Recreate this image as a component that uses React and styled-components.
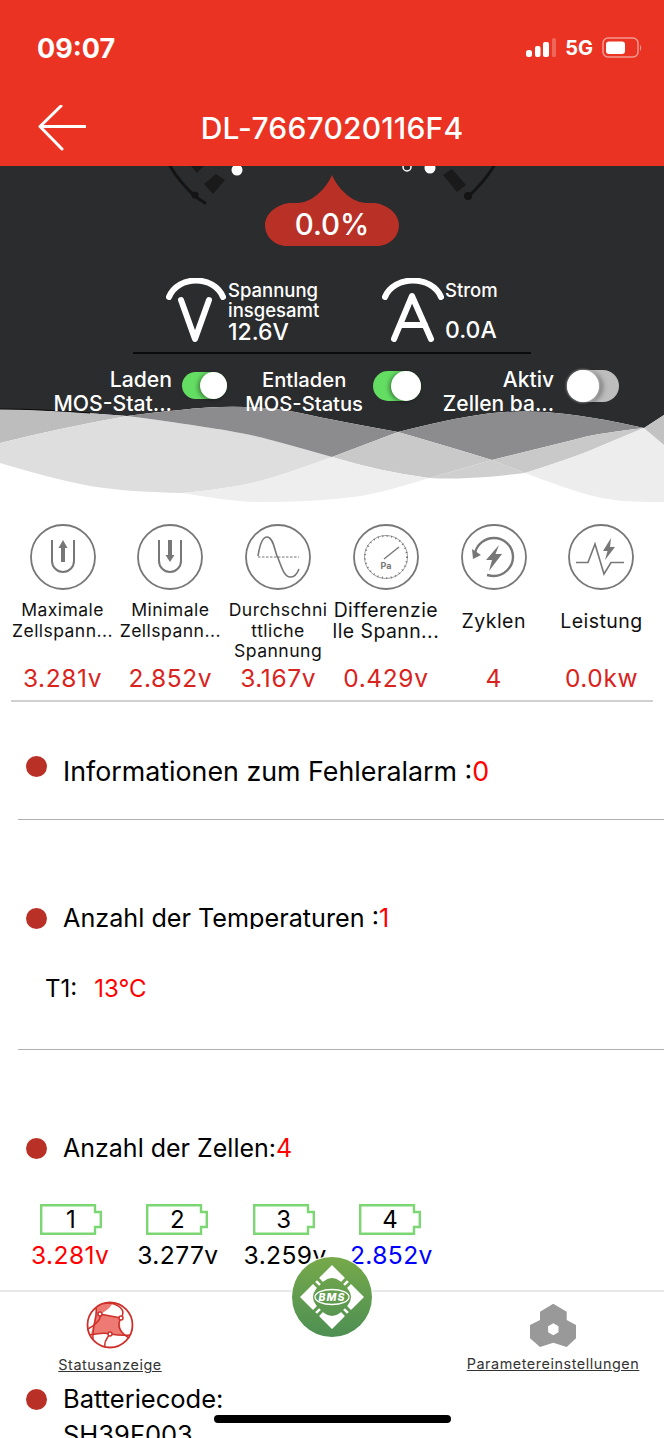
import React from "react";
import styled, { createGlobalStyle } from "styled-components";

const GlobalStyle = createGlobalStyle`
  html, body {
    margin: 0;
    padding: 0;
    background: #fff;
  }
`;

const Page = styled.div`
  position: relative;
  width: 664px;
  height: 1438px;
  overflow: hidden;
  background: #fff;
  color: #000;
  font-family: Inter, "Noto Sans", sans-serif;
`;

const Header = styled.header`
  height: 166px;
  background: #ea3323;
  color: #fff;
`;

const StatusBar = styled.div`
  height: 96px;
  padding: 0 22px 0 37px;
  box-sizing: border-box;
  display: flex;
  align-items: center;
  justify-content: space-between;
`;

const Clock = styled.span`
  font-size: 27px;
  font-weight: 700;
`;

const StatusIcons = styled.div`
  display: flex;
  align-items: center;
  gap: 9px;
`;

const Network = styled.span`
  font-size: 20px;
  font-weight: 700;
`;

const TitleBar = styled.div`
  height: 64px;
  padding: 0 38px;
  display: grid;
  grid-template-columns: 1fr auto 1fr;
  align-items: center;
`;

const Title = styled.h1`
  margin: 0;
  font-size: 30px;
  font-weight: 500;
  letter-spacing: 0.2px;
`;

const Hero = styled.section`
  position: relative;
  height: 344px;
  background: #2b2c2e;
  color: #fff;
`;

const Waves = styled.svg`
  position: absolute;
  left: 0;
  bottom: 0;
`;

const GaugeZone = styled.div`
  position: relative;
  height: 80px;
  display: flex;
  justify-content: center;
  padding-top: 9px;
  box-sizing: border-box;
`;

const GaugeMarks = styled.svg`
  position: absolute;
  left: 0;
  top: 0;
`;

const Badge = styled.div`
  position: relative;
  width: 134px;
  height: 71px;
  display: flex;
  align-items: flex-end;
  justify-content: center;
  padding-bottom: 6px;
  box-sizing: border-box;
  font-size: 29.5px;
  font-weight: 500;
  line-height: 32px;
`;

const BadgeShape = styled.svg`
  position: absolute;
  left: 0;
  top: 0;
`;

const BadgeText = styled.span`
  position: relative;
`;

const Readings = styled.div`
  position: relative;
  display: flex;
  justify-content: center;
  gap: 61px;
  padding-top: 32px;
  height: 74px;
`;

const Reading = styled.div`
  display: flex;
  width: ${(p) => p.$width}px;
`;

const ReadingText = styled.div`
  display: flex;
  flex-direction: column;
  justify-content: space-between;
  height: 62px;
  padding-top: 2px;
  font-size: 18.5px;
  font-weight: 500;
  line-height: 20px;
`;

const ReadingValue = styled.div`
  font-size: 23px;
  line-height: 24px;
`;

const HeroRule = styled.div`
  position: relative;
  width: 398px;
  height: 2px;
  margin: 0 auto;
  background: #0b0b0c;
`;

const Switches = styled.div`
  position: relative;
  display: flex;
  margin-top: 14px;
`;

const SwitchGroup = styled.div`
  width: ${(p) => p.$width}px;
  display: flex;
  justify-content: flex-end;
  gap: ${(p) => p.$gap}px;
`;

const SwitchLabel = styled.div`
  text-align: ${(p) => p.$align};
  font-size: ${(p) => p.$size}px;
  font-weight: 500;
  line-height: 23.5px;
  white-space: nowrap;
`;

const SwitchSlot = styled.div`
  height: 35px;
  display: flex;
  align-items: center;
`;

const Track = styled.div`
  position: relative;
  width: ${(p) => p.$w}px;
  height: ${(p) => p.$h}px;
  border-radius: ${(p) => p.$h / 2}px;
  background: ${(p) => (p.$on ? "#64dd63" : "#bdbdbd")};
`;

const Knob = styled.div`
  position: absolute;
  top: 0;
  ${(p) => (p.$on ? "right: 0;" : "left: 0;")}
  width: ${(p) => p.$h}px;
  height: ${(p) => p.$h}px;
  border-radius: 50%;
  background: #fff;
  box-shadow: ${(p) => (p.$on ? "-2px 1px 4px rgba(0, 0, 0, 0.4)" : "0 0 3px rgba(255, 255, 255, 0.8), 4px 1px 5px rgba(0, 0, 0, 0.35)")};
`;

const Metrics = styled.section`
  display: grid;
  grid-template-columns: repeat(6, 107.8px);
  justify-content: center;
  margin: 0 11px;
  padding-top: 14px;
  height: 176px;
  border-bottom: 2px solid #d0d0d0;
  width: 642px;
`;

const Metric = styled.div`
  display: flex;
  flex-direction: column;
  align-items: center;
`;

const MetricLabel = styled.div`
  height: 62px;
  margin-top: 10px;
  font-size: ${(p) => p.$size}px;
  line-height: 20.7px;
  letter-spacing: 0.45px;
  color: #111;
  text-align: center;
  white-space: nowrap;
`;

const MetricLines = styled.div`
  min-height: 42px;
  display: flex;
  flex-direction: column;
  justify-content: center;
`;

const MetricValue = styled.div`
  margin-top: 3px;
  font-size: 24.5px;
  line-height: 26px;
  letter-spacing: 0.6px;
  color: #d9231d;
`;

const Section = styled.section`
  margin-left: 18px;
  padding-top: ${(p) => p.$top}px;
  padding-bottom: ${(p) => p.$bottom || 0}px;
  border-bottom: ${(p) => (p.$ruled ? "1.5px solid #b0b0b0" : "none")};
`;

const RowHead = styled.div`
  display: flex;
  margin-left: 8px;
`;

const Dot = styled.span`
  flex: none;
  width: 21px;
  height: 21px;
  margin-top: ${(p) => p.$top}px;
  margin-right: 16px;
  border-radius: 50%;
  background: #b93027;
`;

const RowTitle = styled.div`
  font-size: ${(p) => p.$size}px;
  line-height: 36px;
  max-height: ${(p) => (p.$clip ? "29px" : "none")};
  overflow: hidden;
`;

const Red = styled.span`
  color: #f00;
`;

const TempRow = styled.div`
  display: flex;
  gap: 17px;
  margin: 46px 0 0 27px;
  font-size: 24px;
  line-height: 28px;
`;

const Cells = styled.div`
  display: grid;
  grid-template-columns: repeat(4, 106.3px);
  margin: 45px 0 0 18px;
`;

const Cell = styled.div`
  display: flex;
  flex-direction: column;
  align-items: flex-start;
`;

const CellShell = styled.div`
  position: relative;
  width: 62px;
  height: 31px;
  margin-left: 4px;
  display: flex;
  align-items: center;
  justify-content: center;
  font-size: 24px;
`;

const CellOutline = styled.svg`
  position: absolute;
  left: 0;
  top: 0;
`;

const CellNumber = styled.span`
  position: relative;
`;

const CellValue = styled.div`
  margin: 7px 0 0 -5px;
  font-size: 24.6px;
  line-height: 26px;
  letter-spacing: 0.4px;
  white-space: nowrap;
  color: ${(p) => p.$color};
`;

const TabBar = styled.nav`
  position: absolute;
  left: 0;
  top: 1290px;
  width: 664px;
  height: 86px;
  background: #fff;
  border-top: 2px solid #e8e8e8;
  box-sizing: border-box;
`;

const TabItem = styled.div`
  position: absolute;
  top: ${(p) => p.$top}px;
  left: ${(p) => p.$left}px;
  width: ${(p) => p.$width}px;
  display: flex;
  flex-direction: column;
  align-items: center;
`;

const TabLabel = styled.span`
  margin-top: ${(p) => p.$gap}px;
  font-size: 14.4px;
  line-height: 16px;
  letter-spacing: 0.55px;
  color: #333;
  text-decoration: underline;
  white-space: nowrap;
`;

const BmsButton = styled.div`
  position: absolute;
  left: 291px;
  top: 1256px;
  width: 82px;
  height: 82px;
  border-radius: 50%;
  background: #fff;
  display: flex;
  align-items: center;
  justify-content: center;
`;

const HomeBar = styled.div`
  position: absolute;
  left: 214px;
  top: 1415px;
  width: 237px;
  height: 8px;
  border-radius: 4px;
  background: #000;
`;

// quadratic smoothing through a list of points, without the leading move
const curve = (pts) => {
  const last = pts[pts.length - 1];
  let d = `L${pts[0][0]} ${pts[0][1]}`;
  if (pts.length === 2) return `${d}L${last[0]} ${last[1]}`;
  for (let i = 1; i < pts.length - 1; i++) {
    const end = i === pts.length - 2 ? last : [(pts[i][0] + pts[i + 1][0]) / 2, (pts[i][1] + pts[i + 1][1]) / 2];
    d += `Q${pts[i][0]} ${pts[i][1]} ${end[0]} ${end[1]}`;
  }
  return d;
};
const rev = (pts) => [...pts].reverse();
const region = (...parts) => `M${parts[0][0][0]} ${parts[0][0][1]}${parts.map(curve).join("")}Z`;

const tLeft = [[0, 14], [67, 16], [127, 21]];
const tMid = [[127, 21], [233, 35], [290, 50], [332, 62]];
const tLow = [[332, 62], [382, 77], [429, 83], [447, 84], [490, 82], [525, 78]];
const tRise = [[525, 78], [575, 62], [610, 47], [644, 33]];
const hLeft = [[0, 48], [60, 33], [127, 21]];
const hTop = [[127, 21], [183, 14], [233, 11], [283, 14], [332, 25], [398, 37]];
const hDown = [[398, 37], [450, 52], [492, 65]];
const hLow = [[492, 65], [525, 78]];
const hTail = [[525, 78], [565, 93], [599, 103], [630, 107], [664, 107]];
const uLeft = [[0, 68], [67, 88], [133, 97], [183, 98]];
const uRise = [[183, 98], [233, 93], [283, 80], [332, 62]];
const uUp = [[332, 62], [398, 37]];
const uTop = [[398, 37], [465, 20], [532, 15], [600, 23], [644, 33]];
const vLow = [[183, 98], [233, 107], [283, 107], [332, 105], [382, 98], [429, 83]];
const vUp = [[429, 83], [492, 65]];
const vRise = [[492, 65], [565, 47], [600, 38], [644, 33]];
const rTop = [[644, 33], [664, 20]];
const rDown = [[664, 50], [644, 33]];

const WaveShapes = () => (
  <Waves width="664" height="115" viewBox="0 0 664 115">
    <path d={region(tLeft, hTop, uTop, rTop, [[664, 20], [664, 115]], [[664, 115], [0, 115]])} fill="#fff" />
    <path d={region(tLeft, rev(hLeft))} fill="#bdbdbe" />
    <path d={region(hLeft, tMid, rev(uRise), rev(uLeft), [[0, 68], [0, 48]])} fill="#dedede" />
    <path d={region(tMid, uUp, rev(hTop))} fill="#8c8c8e" />
    <path d={region(uTop, rev(vRise), rev(hDown))} fill="#8c8c8e" />
    <path d={region(uUp, hDown, rev(vUp), rev(tLow.slice(0, 3)))} fill="#c9c9c9" />
    <path d={region(vUp, hLow, rev(tLow.slice(2)))} fill="#cfcfcf" />
    <path d={region(vRise, rev(tRise), rev(hLow))} fill="#c9c9c9" />
    <path d={region(uRise, tLow.slice(0, 3), rev(vLow))} fill="#eee" />
    <path d={region(tRise, rev(rDown), [[664, 50], [664, 107]], rev(hTail))} fill="#ededed" />
    <path d={region(rTop, [[664, 20], [664, 50]], rDown)} fill="#c2c2c2" />
    <path d="M0 14Q40 14 90 18" fill="none" stroke="#0c0c0c" strokeWidth="1" />
  </Waves>
);

const Gauge = () => (
  <GaugeMarks width="664" height="45" viewBox="0 0 664 45">
    <g fill="none" stroke="#141414" strokeWidth="3" strokeLinecap="round">
      <path d="M170 0Q180 17 196 31L205 37" />
      <path d="M494 0Q484 16 468 31" />
    </g>
    <circle cx="195" cy="29" r="3.5" fill="#141414" />
    <circle cx="468" cy="30" r="4" fill="#141414" />
    <g fill="#1a1a1a">
      <path d="M191 0H204L197 7Z" />
      <path d="M206 19L218 9L227 15L215 29Z" transform="translate(-2 -1)" />
      <path d="M443 9L452 3L466 19L457 26Z" />
    </g>
    <circle cx="237" cy="4" r="5.5" fill="#fff" />
    <circle cx="407" cy="1" r="4" fill="none" stroke="#fff" strokeWidth="1.5" />
    <circle cx="430" cy="2" r="5.5" fill="#fff" />
  </GaugeMarks>
);

const BackArrow = () => (
  <svg width="48" height="46" viewBox="0 0 48 46" fill="none" stroke="#fff" strokeWidth="3" strokeLinecap="round" strokeLinejoin="round">
    <path d="M47 21.5H3M23 1L2 21.5L24 44" />
  </svg>
);

const SignalIcon = () => (
  <svg width="30" height="20" viewBox="0 0 30 20" fill="#fff">
    <rect x="0" y="12" width="6" height="7" rx="2.5" />
    <rect x="9" y="8" width="5.5" height="11" rx="2" />
    <rect x="17" y="4" width="6" height="15" rx="2" />
    <rect x="26" y="0" width="4" height="19" rx="1.5" opacity="0.25" />
  </svg>
);

const BatteryIcon = () => (
  <svg width="40" height="22" viewBox="0 0 40 22">
    <rect x="1" y="1" width="35" height="19" rx="5" fill="none" stroke="#fff" strokeOpacity="0.5" strokeWidth="1.5" />
    <rect x="4" y="4.5" width="19" height="12.5" rx="3" fill="#fff" />
    <path d="M38 8C39.5 9 39.5 13 38 14Z" fill="#fff" fillOpacity="0.5" />
  </svg>
);

const VoltIcon = () => (
  <svg width="62" height="66" viewBox="0 0 62 66">
    <path d="M3 19C12 -3 48 -3 57 19" fill="none" stroke="#fff" strokeWidth="6" strokeLinecap="round" />
    <path d="M15 22L29 61L43 22" fill="none" stroke="#fff" strokeWidth="6" strokeLinecap="round" strokeLinejoin="round" />
  </svg>
);

const AmpIcon = () => (
  <svg width="63" height="66" viewBox="0 0 63 66">
    <path d="M3 19C12 -3 50 -3 59 19" fill="none" stroke="#fff" strokeWidth="6" strokeLinecap="round" />
    <path d="M12 61L30 18L49 61M18 47H43" fill="none" stroke="#fff" strokeWidth="6" strokeLinecap="round" strokeLinejoin="round" />
  </svg>
);

const IconRing = ({ children }) => (
  <svg width="66" height="66" viewBox="0 0 66 66" fill="none" stroke="#777" strokeWidth="1.6">
    <circle cx="33" cy="33" r="32" strokeWidth="1.8" />
    {children}
  </svg>
);

const metricIcons = {
  up: (
    <>
      <path d="M22 16V37A11 11 0 0 0 44 37V16" strokeWidth="2" />
      <path d="M33 16L37.5 24H28.5Z" fill="#777" stroke="none" />
      <rect x="31" y="22" width="4" height="16" fill="#777" stroke="none" />
    </>
  ),
  down: (
    <>
      <path d="M22 16V37A11 11 0 0 0 44 37V16" strokeWidth="2" />
      <rect x="31" y="16" width="4" height="18" fill="#777" stroke="none" />
      <path d="M33 38L37.5 31H28.5Z" fill="#777" stroke="none" />
    </>
  ),
  sine: (
    <>
      <path d="M13 32C15 19 18 13 22 13C29 13 30 30 33 34C37 45 40 54 46 53C50 53 52 50 54 45" />
      <path d="M13 33H54" strokeDasharray="2.5 1.5" strokeWidth="1.2" />
    </>
  ),
  gauge: (
    <>
      <circle cx="33" cy="33" r="21" strokeDasharray="1 3.5" strokeWidth="2" />
      <circle cx="33" cy="33" r="21.5" strokeWidth="0.7" />
      <path d="M31 35L46 23" strokeWidth="1.4" />
      <text x="33" y="45" fontSize="9" fontWeight="700" fill="#777" stroke="none" textAnchor="middle" fontFamily="Inter, sans-serif">Pa</text>
    </>
  ),
  cycle: (
    <>
      <path d="M14 29C16 20 24 14 33 14C43 14 52 22 52 33C52 43 43 52 33 52C30 52 28 51.5 26 51" strokeWidth="2.4" />
      <path d="M11 25L20 31L12 35Z" fill="#777" stroke="none" />
      <path d="M38 21L25 36H31L28 47L41 30H34.5Z" fill="#777" stroke="none" />
    </>
  ),
  power: (
    <>
      <path d="M8 38.5H20L27 20L36 50L43 38.5H56" />
      <path d="M43 14L35 27H39.5L37 36L47 23H42Z" fill="#777" stroke="none" />
    </>
  ),
};

const GlobeIcon = () => (
  <svg width="48" height="48" viewBox="-24 -24 48 48" fill="none" stroke="#cf2f2a" strokeWidth="1.5">
    <path d="M-14 -17C-8 -21 -3 -22 2 -22C2 -19 -3 -14 -10 -11L11 -7C9 1 10 6 17 11L0 9L-19 9C-17 2 -15 -8 -14 -17Z" fill="#ee7a74" stroke="none" />
    <path d="M-4 -22C8 -22 17 -15 11 -7C7 0 8 6 19 13" />
    <path d="M-14 -17C-12 -8 -18 0 -17 15" />
    <path d="M-22 4C-14 0 -8 -7 -10 -11L11 -7" />
    <path d="M-20 10C-10 8 -4 8 0 9C6 10 13 11 20 10" />
    <path d="M0 9C-4 14 -6 19 -5 22" />
    <circle cx="0" cy="0" r="22.5" strokeWidth="1.8" />
    <g fill="#fff">
      <circle cx="-10" cy="-11" r="2" />
      <circle cx="11" cy="-7" r="2" />
      <circle cx="0" cy="9" r="2" />
    </g>
  </svg>
);

const HexIcon = () => (
  <svg width="46" height="45" viewBox="0 0 46 45">
    <path
      d="M23.3 .7L36.7 8.7V17L46 22V35.3L36.7 44L23.3 39.7L10 44L0 35.3V22L10 17V8.7Z"
      fill="#999"
    />
    <path d="M23.3 20.3L28.5 23.3V29.3L23.3 32.3L18.1 29.3V23.3Z" fill="#fff" />
  </svg>
);

const BmsChip = () => (
  <svg width="80" height="80" viewBox="-40 -40 80 80">
    <defs>
      <linearGradient id="chipFill" x1="0" y1="0" x2="0" y2="1">
        <stop offset="0" stopColor="#76a94a" />
        <stop offset="1" stopColor="#4d8f53" />
      </linearGradient>
    </defs>
    <circle r="40" fill="url(#chipFill)" />
    {[0, 90, 180, 270].map((a) => (
      <g key={a} transform={`rotate(${a})`}>
        <path d="M0 -32L11.5 -20.5L8 -16Q0 -22 -8 -16L-11.5 -20.5Z" fill="#fff" />
        <g transform="rotate(45)" stroke="#fff" strokeWidth="2.5" fill="none">
          <path d="M-5.5 -17V-22.5M0 -17V-22.5M5.5 -17V-22.5" />
        </g>
      </g>
    ))}
    <ellipse rx="17" ry="7.5" fill="none" stroke="#fff" strokeWidth="1.3" />
    <text y="4" textAnchor="middle" fontSize="10.5" fontWeight="800" fontStyle="italic" fill="#fff" fontFamily="Inter, sans-serif" letterSpacing="1">BMS</text>
  </svg>
);

const metrics = [
  { icon: "up", lines: ["Maximale", "Zellspann..."], value: "3.281v", size: 17.5 },
  { icon: "down", lines: ["Minimale", "Zellspann..."], value: "2.852v", size: 17.6 },
  { icon: "sine", lines: ["Durchschni", "ttliche", "Spannung"], value: "3.167v", size: 17.6 },
  { icon: "gauge", lines: ["Differenzie", "lle Spann..."], value: "0.429v", size: 19.4 },
  { icon: "cycle", lines: ["Zyklen"], value: "4", size: 19.5 },
  { icon: "power", lines: ["Leistung"], value: "0.0kw", size: 19.5 },
];

const cells = [
  { n: 1, value: "3.281v", color: "#f00" },
  { n: 2, value: "3.277v", color: "#000" },
  { n: 3, value: "3.259v", color: "#000" },
  { n: 4, value: "2.852v", color: "#00f" },
];

const switches = [
  { width: 227, gap: 10, align: "right", size: 21.2, lines: ["Laden", "MOS-Stat..."], w: 45, h: 27, on: true },
  { width: 194, gap: 10, align: "center", size: 20.2, lines: ["Entladen", "MOS-Status"], w: 48, h: 30, on: true },
  { width: 198, gap: 13, align: "right", size: 21, lines: ["Aktiv", "Zellen ba..."], w: 52, h: 32, on: false },
];

export default function App() {
  return (
    <Page>
      <GlobalStyle />
      <Header>
        <StatusBar>
          <Clock>09:07</Clock>
          <StatusIcons>
            <SignalIcon />
            <Network>5G</Network>
            <BatteryIcon />
          </StatusIcons>
        </StatusBar>
        <TitleBar>
          <BackArrow />
          <Title>DL-7667020116F4</Title>
        </TitleBar>
      </Header>

      <Hero>
        <WaveShapes />
        <GaugeZone>
          <Gauge />
          <Badge>
            <BadgeShape width="134" height="71" viewBox="0 0 134 71">
              <path
                d="M67 0C72 12 86 28 102 28H110C124 30 134 40 134 50C134 62 124 71 112 71H22C10 71 0 62 0 50C0 40 10 30 24 28H32C48 28 62 12 67 0Z"
                fill="#b93027"
              />
            </BadgeShape>
            <BadgeText>0.0%</BadgeText>
          </Badge>
        </GaugeZone>

        <Readings>
          <Reading $width={155}>
            <VoltIcon />
            <ReadingText>
              <div>
                Spannung
                <br />
                insgesamt
              </div>
              <ReadingValue>12.6V</ReadingValue>
            </ReadingText>
          </Reading>
          <Reading $width={116}>
            <AmpIcon />
            <ReadingText>
              <div>Strom</div>
              <ReadingValue>0.0A</ReadingValue>
            </ReadingText>
          </Reading>
        </Readings>
        <HeroRule />

        <Switches>
          {switches.map((s) => (
            <SwitchGroup key={s.lines[0]} $width={s.width} $gap={s.gap}>
              <SwitchLabel $align={s.align} $size={s.size}>
                {s.lines[0]}
                <br />
                {s.lines[1]}
              </SwitchLabel>
              <SwitchSlot>
                <Track $w={s.w} $h={s.h} $on={s.on}>
                  <Knob $h={s.h} $on={s.on} />
                </Track>
              </SwitchSlot>
            </SwitchGroup>
          ))}
        </Switches>
      </Hero>

      <Metrics>
        {metrics.map((m) => (
          <Metric key={m.icon}>
            <IconRing>{metricIcons[m.icon]}</IconRing>
            <MetricLabel $size={m.size}>
              <MetricLines>
                {m.lines.map((line) => (
                  <div key={line}>{line}</div>
                ))}
              </MetricLines>
            </MetricLabel>
            <MetricValue>{m.value}</MetricValue>
          </Metric>
        ))}
      </Metrics>

      <Section $top={51} $bottom={37} $ruled>
        <RowHead>
          <Dot $top={3} />
          <RowTitle $clip $size={26.8}>
            Informationen zum Fehleralarm :<Red>0</Red>
          </RowTitle>
        </RowHead>
      </Section>

      <Section $top={80} $bottom={46} $ruled>
        <RowHead>
          <Dot $top={8} />
          <RowTitle $clip $size={25.2}>
            Anzahl der Temperaturen :<Red>1</Red>
          </RowTitle>
        </RowHead>
        <TempRow>
          <span>T1:</span>
          <Red>13°C</Red>
        </TempRow>
      </Section>

      <Section $top={80}>
        <RowHead>
          <Dot $top={8} />
          <RowTitle $clip $size={25}>
            Anzahl der Zellen:<Red>4</Red>
          </RowTitle>
        </RowHead>
        <Cells>
          {cells.map((c) => (
            <Cell key={c.n}>
              <CellShell>
                <CellOutline width="62" height="31" viewBox="0 0 62 31">
                  <path d="M1.2 1.2H55V8H60.8V23H55V29.8H1.2Z" fill="none" stroke="#7cd674" strokeWidth="2.4" />
                </CellOutline>
                <CellNumber>{c.n}</CellNumber>
              </CellShell>
              <CellValue $color={c.color}>{c.value}</CellValue>
            </Cell>
          ))}
        </Cells>
      </Section>

      <Section $top={113}>
        <RowHead>
          <Dot $top={8} />
          <RowTitle $size={25.5}>
            Batteriecode:
            <br />
            SH39F003
          </RowTitle>
        </RowHead>
      </Section>

      <TabBar>
        <TabItem $left={10} $width={200} $top={9}>
          <GlobeIcon />
          <TabLabel $gap={8}>Statusanzeige</TabLabel>
        </TabItem>
        <TabItem $left={453} $width={200} $top={11}>
          <HexIcon />
          <TabLabel $gap={8}>Parametereinstellungen</TabLabel>
        </TabItem>
      </TabBar>
      <BmsButton>
        <BmsChip />
      </BmsButton>
      <HomeBar />
    </Page>
  );
}
